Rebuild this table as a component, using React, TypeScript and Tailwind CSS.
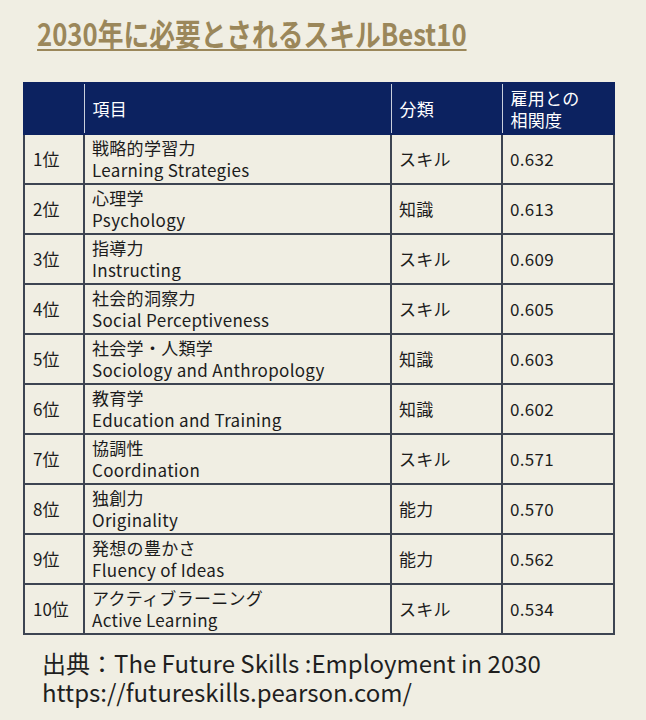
import React from 'react';

type Skill = {
  rank: string;
  ja: string;
  en: string;
  kind: string;
  score: string;
};

const skills: Skill[] = [
  { rank: '1位', ja: '戦略的学習力', en: 'Learning Strategies', kind: 'スキル', score: '0.632' },
  { rank: '2位', ja: '心理学', en: 'Psychology', kind: '知識', score: '0.613' },
  { rank: '3位', ja: '指導力', en: 'Instructing', kind: 'スキル', score: '0.609' },
  { rank: '4位', ja: '社会的洞察力', en: 'Social Perceptiveness', kind: 'スキル', score: '0.605' },
  { rank: '5位', ja: '社会学・人類学', en: 'Sociology and Anthropology', kind: '知識', score: '0.603' },
  { rank: '6位', ja: '教育学', en: 'Education and Training', kind: '知識', score: '0.602' },
  { rank: '7位', ja: '協調性', en: 'Coordination', kind: 'スキル', score: '0.571' },
  { rank: '8位', ja: '独創力', en: 'Originality', kind: '能力', score: '0.570' },
  { rank: '9位', ja: '発想の豊かさ', en: 'Fluency of Ideas', kind: '能力', score: '0.562' },
  { rank: '10位', ja: 'アクティブラーニング', en: 'Active Learning', kind: 'スキル', score: '0.534' },
];

const font = { fontFamily: '"Noto Sans CJK JP", "Noto Sans", sans-serif' };

const App = () => {
  return (
    <div className="w-[646px] h-[720px] bg-[#f0eee3] overflow-hidden" style={font}>
      {/* title */}
      <div className="pl-[37px] pt-[12px] h-[82px]">
        <h1 className="inline-block origin-left scale-x-[0.83] text-[31px] leading-[42px] font-bold text-[#9b875a] underline decoration-2 underline-offset-[3px] whitespace-nowrap">
          2030年に必要とされるスキルBest10
        </h1>
      </div>

      {/* table */}
      <table className="ml-[23px] w-[590px] border-collapse table-fixed text-[17px] tracking-[0.3px] text-[#1c1c1c]">
        <colgroup>
          <col className="w-[60px]" />
          <col className="w-[307px]" />
          <col className="w-[111px]" />
          <col className="w-[112px]" />
        </colgroup>
        <thead>
          <tr className="h-[51px] bg-[#0c2260] text-white">
            <th className="border-2 border-[#0c2260] border-r-[#c9cfdc] border-r"></th>
            <th className="border-y-2 border-[#0c2260] border-r border-r-[#c9cfdc] text-left font-normal pl-[8px]">項目</th>
            <th className="border-y-2 border-[#0c2260] border-r border-r-[#c9cfdc] text-left font-normal pl-[8px]">分類</th>
            <th className="border-2 border-[#0c2260] border-l-0 text-left font-normal pl-[8px] leading-[22px]">
              雇用との
              <br />
              相関度
            </th>
          </tr>
        </thead>
        <tbody>
          {skills.map((s) => (
            <tr key={s.rank} className="h-[50px]">
              <td className="border-2 border-[#3d4452] pl-[8px] whitespace-nowrap tracking-normal">{s.rank}</td>
              <td className="border-2 border-[#3d4452] pl-[7px] leading-[22px]">
                <div>{s.ja}</div>
                <div>{s.en}</div>
              </td>
              <td className="border-2 border-[#3d4452] pl-[7px]">{s.kind}</td>
              <td className="border-2 border-[#3d4452] pl-[7px]">{s.score}</td>
            </tr>
          ))}
        </tbody>
      </table>

      {/* source */}
      <div className="pl-[42px] pt-[13px] text-[24px] leading-[29px] text-[#1f1f1f]">
        <div>出典：The Future Skills :Employment in 2030</div>
        <div>https://futureskills.pearson.com/</div>
      </div>
    </div>
  );
};

export default App;
